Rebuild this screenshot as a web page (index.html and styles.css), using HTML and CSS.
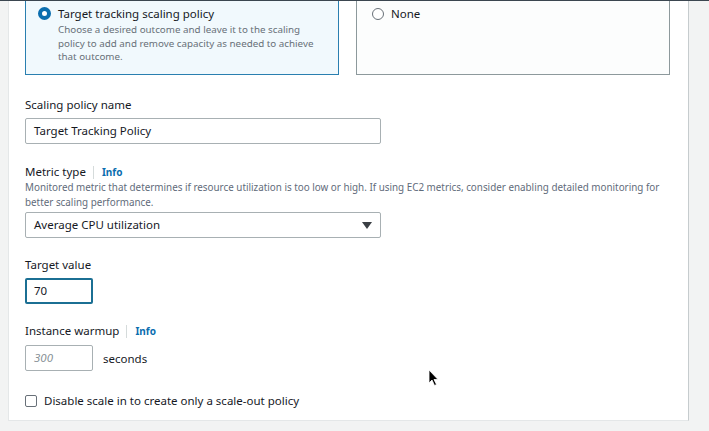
FILE: index.html
```html
<!DOCTYPE html>
<html lang="en">
<head>
<meta charset="utf-8">
<title>Scaling policy</title>
<link rel="stylesheet" href="styles.css">
</head>
<body>
<div class="topline"></div>
<div class="page">
  <div class="panel">
    <div class="cards">
      <div class="card card-selected">
        <span class="radio radio-on"></span>
        <div class="card-text">
          <div class="card-title">Target tracking scaling policy</div>
          <div class="card-desc">Choose a desired outcome and leave it to the scaling policy to add and remove capacity as needed to achieve that outcome.</div>
        </div>
      </div>
      <div class="card">
        <span class="radio"></span>
        <div class="card-text">
          <div class="card-title">None</div>
        </div>
      </div>
    </div>

    <div class="field f-name">
      <div class="label">Scaling policy name</div>
      <div class="input wide">Target Tracking Policy</div>
    </div>

    <div class="field f-metric">
      <div class="label">Metric type <span class="sep"></span><span class="info">Info</span></div>
      <div class="desc">Monitored metric that determines if resource utilization is too low or high. If using EC2 metrics, consider enabling detailed monitoring for better scaling performance.</div>
      <div class="input wide select">Average CPU utilization
        <svg class="caret" width="10" height="7" viewBox="0 0 10 7"><path d="M0 0 H10 L5 7 Z" fill="#3a3f44"/></svg>
      </div>
    </div>

    <div class="field f-target">
      <div class="label">Target value</div>
      <div class="input small focused">70</div>
    </div>

    <div class="field f-warmup">
      <div class="label">Instance warmup <span class="sep"></span><span class="info">Info</span></div>
      <div class="row">
        <div class="input small placeholder">300</div>
        <span class="unit">seconds</span>
      </div>
    </div>

    <div class="check-row">
      <span class="checkbox"></span>
      <span class="check-label">Disable scale in to create only a scale-out policy</span>
    </div>
  </div>
</div>
<svg class="cursor" width="12" height="18" viewBox="0 0 12 18"><path d="M1 1 L1 14 L4 11 L6.5 16.5 L8.5 15.5 L6 10.5 L10 10.5 Z" fill="#000" stroke="#fff" stroke-width="0.8"/></svg>
</body>
</html>
```

FILE: styles.css
```css
* { box-sizing: border-box; }
html, body {
  margin: 0;
  padding: 0;
  width: 709px;
  height: 431px;
  overflow: hidden;
  background: #f2f3f3;
  font-family: "Noto Sans", "Open Sans", sans-serif;
  color: #16191f;
}
.topline {
  position: absolute;
  left: 0; top: 0;
  width: 709px;
  height: 1px;
  background: #3b4650;
  z-index: 2;
}
.page {
  padding-left: 8px;
  width: 689px;
  height: 421px;
}
.panel {
  background: #fff;
  height: 421px;
  border-left: 1px solid #e4e7e8;
  border-right: 1px solid #c6ccce;
  border-bottom: 1px solid #e4e7e8;
  padding: 0 17px 0 16px;
  overflow: hidden;
}
.cards {
  display: flex;
  gap: 17px;
  margin-top: -6px;
}
.card {
  width: 314px;
  height: 81px;
  border: 1px solid #8d999c;
  display: flex;
  gap: 7px;
  padding: 11px 0 0 15px;
  background: #fcfdfd;
}
.card-selected {
  border-color: #2a7fb0;
  background: #f1f9fd;
  padding-left: 12px;
}
.radio {
  flex: none;
  width: 12px;
  height: 12px;
  border-radius: 50%;
  border: 1px solid #687078;
  background: #fff;
  margin-top: 2px;
}
.radio-on {
  width: 13px;
  height: 13px;
  border: 4px solid #0b6eaf;
  margin-top: 1px;
}
.card-title {
  font-size: 11.5px;
  line-height: 16px;
}
.card-desc {
  font-size: 9.8px;
  line-height: 13.5px;
  color: #687078;
  width: 262px;
  margin-top: 1px;
}
.field { display: flex; flex-direction: column; }
.label {
  font-size: 11.5px;
  line-height: 16px;
  height: 16px;
  display: flex;
  align-items: center;
}
.sep {
  display: inline-block;
  width: 1px;
  height: 13px;
  background: #d5dbdb;
  margin: 0 8px 0 7px;
}
.info {
  color: #0b6eaf;
  font-weight: 700;
  font-size: 10px;
}
.desc {
  font-size: 9.85px;
  line-height: 15px;
  color: #5f6b7a;
  margin-top: 0;
  width: 645px;
}
.input {
  height: 26px;
  border: 1px solid #a8b0b3;
  border-radius: 2px;
  font-size: 11.5px;
  line-height: 24px;
  padding-left: 8px;
  margin-top: 5px;
}
.wide { width: 356px; }
.small { width: 68px; }
.select {
  display: flex;
  justify-content: space-between;
  align-items: center;
  padding-right: 8px;
  margin-top: 2px;
}
.focused {
  border: 2px solid #1b6f93;
  padding-left: 7px;
  line-height: 22px;
}
.placeholder {
  color: #879196;
  font-style: italic;
}
.f-name { margin-top: 22px; }
.f-metric { margin-top: 20px; }
.f-target { margin-top: 19px; }
.f-warmup { margin-top: 19px; }
.row {
  display: flex;
  align-items: center;
  gap: 10px;
  margin-top: 6px;
}
.row .input { margin-top: 0; }
.unit {
  font-size: 11.5px;
}
.check-row {
  display: flex;
  align-items: center;
  gap: 7px;
  margin-top: 22px;
}
.checkbox {
  width: 12px;
  height: 12px;
  border: 1px solid #687078;
  border-radius: 2px;
  background: #fff;
}
.check-label {
  font-size: 11.5px;
  line-height: 16px;
}
.cursor {
  position: absolute;
  left: 428px;
  top: 369px;
}
```
